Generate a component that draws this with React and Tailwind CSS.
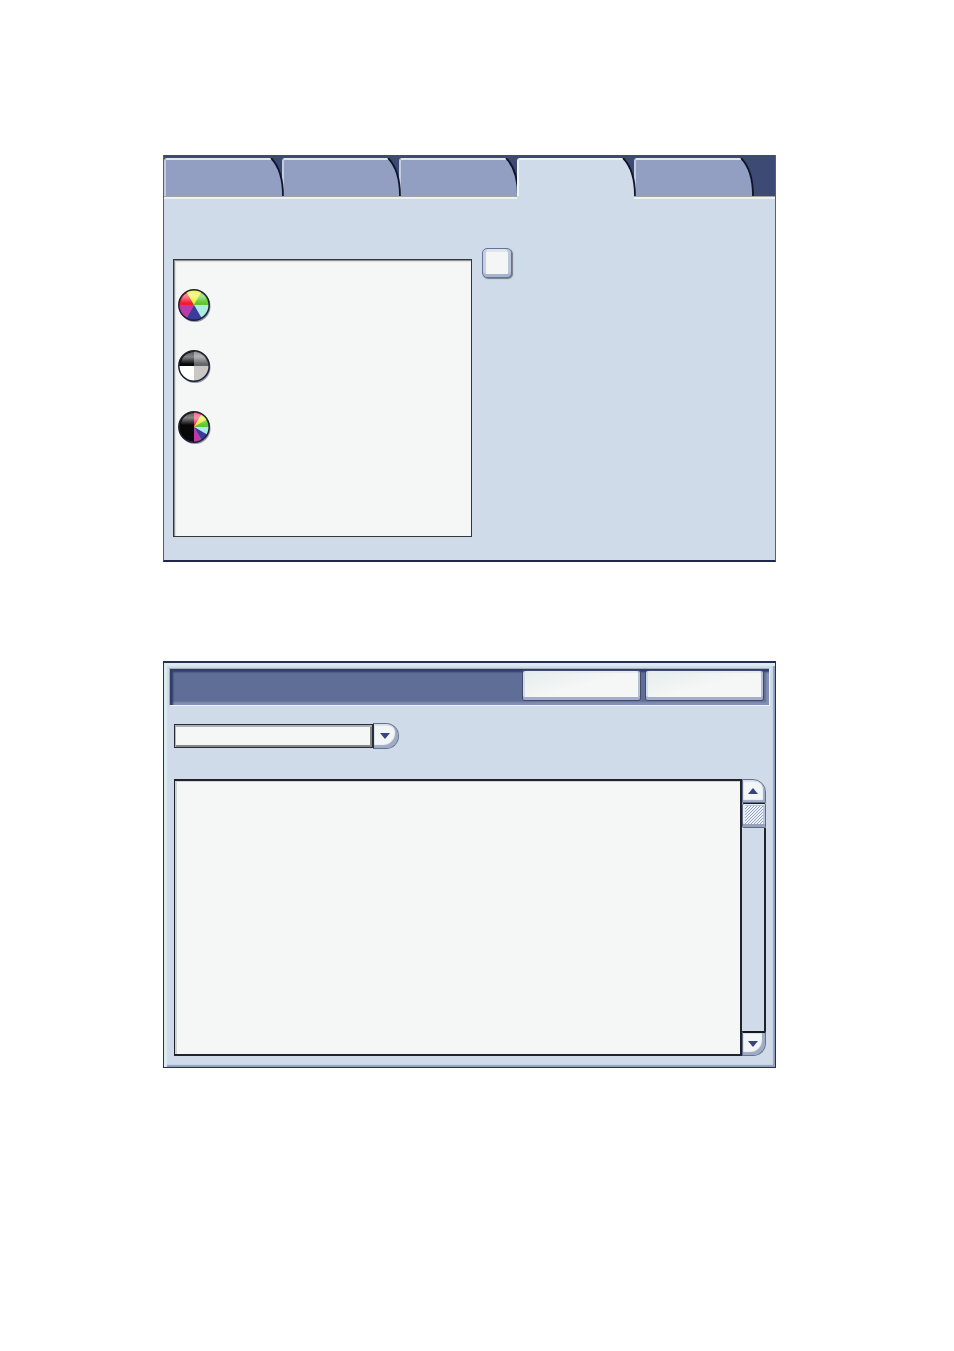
import { useState } from "react";
import clsx from "clsx";

const TABS = ["General", "Layout", "Output", "Image", "Advanced"];

const COLOUR_SLICES = [
  { from: 180, to: 240, fill: "#f01c30" },
  { from: 240, to: 300, fill: "#e8f022" },
  { from: 300, to: 360, fill: "#5cc92c" },
  { from: 0, to: 60, fill: "#aeeaea" },
  { from: 60, to: 120, fill: "#3a3c9c" },
  { from: 120, to: 180, fill: "#bb3aa8" },
];

const MODES = [
  { id: "colour", label: "Full colour", slices: COLOUR_SLICES },
  {
    id: "mono",
    label: "Black and white",
    slices: [
      { from: 180, to: 270, fill: "#08080c" },
      { from: 270, to: 360, fill: "#66676c" },
      { from: 0, to: 90, fill: "#cac7c5" },
      { from: 90, to: 180, fill: "#ffffff" },
    ],
  },
  {
    id: "auto",
    label: "Auto detect",
    slices: [
      { from: 90, to: 270, fill: "#080808" },
      { from: 270, to: 300, fill: "#f0285a" },
      { from: 300, to: 330, fill: "#e8ee22" },
      { from: 330, to: 360, fill: "#5cc92c" },
      { from: 0, to: 30, fill: "#aeeaea" },
      { from: 30, to: 60, fill: "#3a3c9c" },
      { from: 60, to: 90, fill: "#bb3aa8" },
    ],
  },
];

const slicePath = (from, to) => {
  const point = (deg) => {
    const a = (deg * Math.PI) / 180;
    return `${16 + 15 * Math.cos(a)} ${16 + 15 * Math.sin(a)}`;
  };
  return `M16 16L${point(from)}A15 15 0 0 1 ${point(to)}Z`;
};

const ModeIcon = ({ id, slices }) => (
  <svg viewBox="0 0 34 34" className="block size-[34px]" aria-hidden="true">
    <defs>
      <linearGradient id={`gloss-${id}`} x1="0" y1="0" x2="0" y2="1">
        <stop offset="0" stopColor="#fff" stopOpacity="0.35" />
        <stop offset="0.4" stopColor="#fff" stopOpacity="0.5" />
        <stop offset="1" stopColor="#fff" stopOpacity="0" />
      </linearGradient>
    </defs>
    <circle cx="17" cy="17.5" r="15.5" fill="#8b93a8" />
    {slices.map((s) => (
      <path key={s.from} d={slicePath(s.from, s.to)} fill={s.fill} />
    ))}
    <path d="M3 14A13 12 0 0 1 29 14Z" fill={`url(#gloss-${id})`} />
    <circle cx="16" cy="16" r="15.2" fill="none" stroke="#1c1f2e" strokeWidth="1.5" />
  </svg>
);

const Triangle = ({ up }) => (
  <svg viewBox="0 0 10 6" className="block h-[6px] w-[10px]" aria-hidden="true">
    <path d={up ? "M0 6L5 0L10 6Z" : "M0 0L5 6L10 0Z"} fill="#35467c" />
  </svg>
);

const Tab = ({ label, active, onClick }) => (
  <button
    role="tab"
    aria-label={label}
    aria-selected={active}
    onClick={onClick}
    className={clsx("flex h-full items-stretch", active && "z-20")}
  >
    <span
      className={clsx(
        "min-w-0 flex-1 rounded-tl-[3px] border-t-2 border-l-2",
        active
          ? "border-t-[#f0f5f4] border-l-[#edf4f5] bg-[#cfdbe9]"
          : "border-t-[#e3e5e6] border-l-[#c3cddf] bg-[#929fc2]"
      )}
    />
    <svg
      viewBox="0 0 14 38"
      className="relative z-10 -mr-[2px] block h-full w-[14px] shrink-0"
      aria-hidden="true"
    >
      <path d="M0 0C7 6 13 18 13 38H0Z" fill={active ? "#cfdbe9" : "#929fc2"} />
      <path d="M0 1H2" stroke="#e3e5e6" strokeWidth="2" />
      <path d="M1 0C7 6 13 18 13 38" fill="none" stroke="#10142a" strokeWidth="1.8" />
    </svg>
  </button>
);

const HeaderButton = ({ label }) => (
  <button
    aria-label={label}
    className="h-[31px] w-[119px] rounded-[3px] border border-[#434a6d] bg-linear-to-br from-[#e4edeb] to-[#f5f6f6] to-50% shadow-[inset_0_-3px_0_#a2aecb,inset_2px_0_0_#d2dce6,inset_-2px_0_0_#b6c1d5,inset_0_2px_0_#e5eded]"
  />
);

const App = () => {
  const [tab, setTab] = useState("Image");

  return (
    <main className="flex min-h-screen flex-col gap-[99px] bg-white pt-[155px] pr-[178px] pb-12 pl-[163px] font-['Liberation_Sans',sans-serif]">
      <section className="border-x border-b-2 border-x-[#515f88] border-b-[#20264e] bg-[#cfdbe9]">
        {/* Tabs */}
        <div className="bg-[#3c4a74] pt-[3px] pr-[23px]">
          <div role="tablist" className="grid h-[38px] grid-cols-5">
            {TABS.map((t) => (
              <Tab key={t} label={t} active={t === tab} onClick={() => setTab(t)} />
            ))}
          </div>
        </div>
        <div className="grid grid-cols-5 border-t border-[#a5a3a6] bg-[#edf2f1] pr-[23px]">
          {TABS.map((t) => (
            <span key={t} className={clsx("h-[2px]", t === tab && "-mt-px h-[3px] bg-[#cfdbe9]")} />
          ))}
        </div>

        {/* Mode list and option */}
        <div className="grid grid-cols-[51fr_50fr] gap-[10px] pt-[49px] pb-[23px] pl-[9px]">
          <ul className="mt-[11px] flex min-h-[278px] flex-col gap-[27px] border border-[#33363a] bg-[#f5f6f6] pt-[29px] pl-1 shadow-[inset_1px_1px_0_#8e9190,inset_2px_2px_1px_#dfe0df]">
            {MODES.map((m) => (
              <li key={m.id}>
                <button aria-label={m.label} className="block">
                  <ModeIcon id={m.id} slices={m.slices} />
                </button>
              </li>
            ))}
          </ul>
          <div>
            <button
              aria-label="Options"
              className="block size-[30px] rounded-[5px] border border-[#65739a] bg-[#f4f6f6] shadow-[inset_0_-3px_0_#a8b3cc,inset_3px_0_0_#c6d1e0,inset_-3px_0_0_#bac6da,inset_0_3px_0_#dce6eb,1px_1px_1px_#777c8c]"
            />
          </div>
        </div>
      </section>

      <section className="border-t-2 border-r border-b border-l border-[#263052] bg-[#cfdbe9] px-[5px] pt-[5px] pb-[11px] shadow-[inset_3px_3px_1px_#dcebee,inset_-2px_-2px_1px_#919fbe]">
        {/* Header */}
        <header className="flex h-[38px] items-start justify-end gap-1 border border-t-[#a6adba] border-r-[#edf5f4] border-b-[#edf5f4] border-l-[#a6adba] bg-[#5f6e96] pt-px pr-[5px] shadow-[inset_3px_3px_2px_#303c68,inset_-3px_-3px_2px_#8491b4]">
          <HeaderButton label="Cancel" />
          <HeaderButton label="Save" />
        </header>

        {/* Drop-down */}
        <div className="mt-[17px] ml-[5px] flex w-[225px] items-center">
          <select
            aria-label="View"
            className="h-[24px] min-w-0 flex-1 appearance-none border border-[#292c36] bg-[#f5f6f6] shadow-[inset_0_2px_0_#aeb0b6,inset_1px_0_0_#b3b6ba,inset_-2px_-2px_0_#858686]"
          />
          <span className="flex h-[26px] w-[26px] items-center justify-center rounded-r-full border border-[#65708e] border-l-[#292c36] bg-[#f3f6f6] pr-[2px] shadow-[inset_-3px_-3px_1px_#9eabc5,inset_1px_2px_0_#d8e2e8]">
            <Triangle />
          </span>
        </div>

        {/* Content with scroll bar */}
        <div className="mt-[30px] mr-[4px] ml-[5px] flex h-[277px]">
          <div className="flex-1 border-t-2 border-r-2 border-b-2 border-l border-[#20232b] bg-[#f5f6f6] shadow-[inset_2px_1px_0_#cfd4d4]" />
          <div className="flex w-6 flex-col">
            <button
              aria-label="Scroll up"
              className="flex h-[24px] items-center justify-center rounded-tr-[13px] border border-[#65708e] bg-[#f3f6f6] pr-[2px] shadow-[inset_-2px_-2px_1px_#9eabc5,inset_1px_2px_0_#d8e2e8]"
            >
              <Triangle up />
            </button>
            <button
              aria-label="Scroll position"
              className="flex h-[25px] items-center justify-center rounded-[2px] border border-[#606a86] border-t-[#16181f] bg-[#b9c5d9] shadow-[inset_0_-3px_0_#98a2b8,inset_2px_1px_0_#e6edf2]"
            >
              <svg viewBox="0 0 18 18" className="-mt-[2px] block size-[18px]" aria-hidden="true">
                <rect width="18" height="18" fill="#edf3f5" />
                <path
                  d="M0 3L3 0M0 6L6 0M0 9L9 0M0 12L12 0M0 15L15 0M0 18L18 0M3 18L18 3M6 18L18 6M9 18L18 9M12 18L18 12M15 18L18 15"
                  stroke="#8795bd"
                  strokeWidth="0.9"
                />
              </svg>
            </button>
            <div className="flex-1 border-r-2 border-[#20232b] bg-[#cfdbe9]" />
            <button
              aria-label="Scroll down"
              className="flex h-[25px] items-center justify-center rounded-br-[13px] border border-t-2 border-[#65708e] border-t-[#16181f] bg-[#f3f6f6] pr-[2px] shadow-[inset_-3px_-3px_1px_#9eabc5,inset_1px_1px_0_#d8e2e8]"
            >
              <Triangle />
            </button>
          </div>
        </div>
      </section>
    </main>
  );
};

export default App;
